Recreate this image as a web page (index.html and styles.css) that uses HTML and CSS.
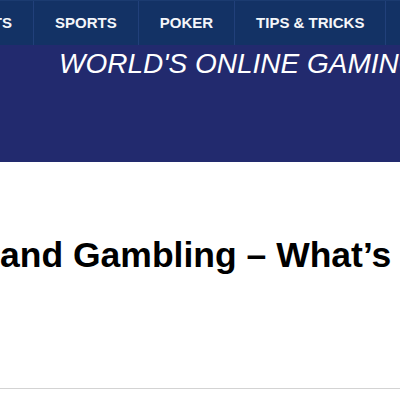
FILE: index.html
```html
<!DOCTYPE html>
<html>
<head>
<meta charset="utf-8">
<link rel="stylesheet" href="styles.css">
</head>
<body>
<header class="site-header">
  <nav class="main-nav">
    <ul class="nav-list">
      <li class="nav-item">SLOTS</li>
      <li class="nav-item">SPORTS</li>
      <li class="nav-item">POKER</li>
      <li class="nav-item">TIPS &amp; TRICKS</li>
      <li class="nav-item">NEWS</li>
    </ul>
  </nav>
  <div class="banner">
    <p class="tagline">WORLD'S ONLINE GAMING GUIDE</p>
  </div>
</header>
<main class="content">
  <h1 class="title">and Gambling – What’s the Difference?</h1>
</main>
<hr class="divider">
</body>
</html>
```
FILE: styles.css
```css
html, body {
  margin: 0;
  padding: 0;
  background: #ffffff;
  overflow: hidden;
  font-family: "Liberation Sans", Arial, sans-serif;
}
.site-header {
  width: 100%;
}
.main-nav {
  background: #133265;
  height: 45px;
  border-top: 1px solid #1b3b70;
  box-sizing: border-box;
  overflow: hidden;
}
.nav-list {
  list-style: none;
  margin: -1px 0 0 -59px;
  padding: 0;
  display: flex;
  white-space: nowrap;
}
.nav-item {
  flex: none;
  padding: 0 21px;
  line-height: 45px;
  font-size: 15px;
  font-weight: bold;
  color: #f4f6fa;
  border-right: 1px solid #21407a;
}
.banner {
  background: #222a6e;
  height: 117px;
  padding-top: 5px;
  box-sizing: border-box;
  overflow: hidden;
}
.tagline {
  margin: 0 0 0 59px;
  font-size: 28px;
  line-height: 28px;
  font-style: italic;
  color: #ffffff;
  white-space: nowrap;
}
.content {
  padding-top: 75px;
  height: 150px;
  box-sizing: border-box;
}
.title {
  margin: 0;
  font-size: 35.5px;
  line-height: 36px;
  font-weight: bold;
  color: #000000;
  white-space: nowrap;
}
.divider {
  margin: 76px 0 0 0;
  border: 0;
  border-top: 1px solid #d3d3d3;
  height: 0;
}
```
